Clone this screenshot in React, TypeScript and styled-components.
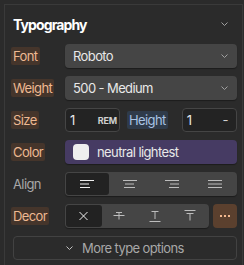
import React from 'react';
import styled, {createGlobalStyle} from 'styled-components';

const GlobalStyle = createGlobalStyle`
  html, body {
    margin: 0;
    padding: 0;
    background: #2b2b2b;
    font-family: Inter, "Noto Sans", sans-serif;
    letter-spacing: -0.6px;
  }
`;

const Frame = styled.div`
  margin: 4px 0 0 4px;
  width: 239px;
  height: 261px;
  box-sizing: border-box;
  border: 1px solid #3a3a3a;
  border-bottom: none;
  padding: 0 5px 0 6px;
`;

const Header = styled.div`
  margin-top: 7px;
  height: 24px;
  display: flex;
  align-items: center;
  justify-content: space-between;
  padding: 0 9px 0 2px;
`;

const Title = styled.h2`
  margin: 0;
  font-size: 14px;
  font-weight: 700;
  letter-spacing: -0.9px;
  color: #ffffff;
`;

const Rows = styled.div`
  margin-top: 8px;
  display: flex;
  flex-direction: column;
  gap: 8px;
`;

const Row = styled.div`
  display: grid;
  grid-template-columns: 54px 1fr;
  align-items: center;
  height: 24px;
`;

type Tone = 'set' | 'inherit' | 'none';

const labelColors: Record<Tone, { fg: string; bg: string }> = {
    set: {fg: '#eeb992', bg: '#45352b'},
    inherit: {fg: '#a9c3e4', bg: '#2f3b4a'},
    none: {fg: '#a8a8a8', bg: 'transparent'},
};

const Label = styled.span<{ $tone: Tone }>`
  justify-self: start;
  padding: 0 2px;
  height: 18px;
  line-height: 18px;
  border-radius: 2px;
  font-size: 13px;
  color: ${p => labelColors[p.$tone].fg};
  background: ${p => labelColors[p.$tone].bg};
`;

const Select = styled.div<{ $bg?: string }>`
  height: 24px;
  box-sizing: border-box;
  border-radius: 4px;
  background: ${p => p.$bg || '#454545'};
  display: flex;
  align-items: center;
  padding: 0 9px 0 8px;
  gap: 8px;
  font-size: 13px;
  color: #e8e8e8;
  box-shadow: 0 1px 1px rgba(0, 0, 0, 0.35);
`;

const Grow = styled.span`
  flex: 1;
`;

const Swatch = styled.span`
  width: 16px;
  height: 16px;
  border-radius: 4px;
  background: #eeeeee;
`;

const SizeLine = styled.div`
  display: flex;
  align-items: center;
`;

const Input = styled.div<{ $w?: number }>`
  width: ${p => (p.$w ? `${p.$w}px` : 'auto')};
  flex: ${p => (p.$w ? 'none' : '1')};
  height: 24px;
  box-sizing: border-box;
  border: 1px solid #454545;
  border-radius: 4px;
  background: #232323;
  display: flex;
  align-items: center;
  padding: 0 8px 0 4px;
  font-size: 13px;
  color: #e8e8e8;
`;

const Unit = styled.span<{ $bold?: boolean }>`
  margin-left: auto;
  margin-right: ${p => (p.$bold ? '-6px' : '0')};
  font-size: ${p => (p.$bold ? '9px' : '13px')};
  font-weight: ${p => (p.$bold ? 700 : 400)};
  letter-spacing: ${p => (p.$bold ? '-0.2px' : '-0.6px')};
  color: #d0d0d0;
`;

const HeightLabel = styled(Label)`
  margin: 0 14px 0 7px;
`;

const Segments = styled.div`
  flex: 1;
  display: flex;
  height: 24px;
  box-sizing: border-box;
  padding: 1px;
  border-radius: 4px;
  background: #454545;
  box-shadow: 0 1px 1px rgba(0, 0, 0, 0.35);
`;

const Segment = styled.div<{ $active?: boolean }>`
  flex: 1;
  display: flex;
  align-items: center;
  justify-content: center;
  border-radius: 3px;
  background: ${p => (p.$active ? '#222222' : 'transparent')};
  color: ${p => (p.$active ? '#f0f0f0' : '#bdbdbd')};
`;

const DecorLine = styled.div`
  display: flex;
  gap: 4px;
`;

const MoreButton = styled.div`
  width: 24px;
  height: 24px;
  border-radius: 4px;
  background: #5b402e;
  display: flex;
  align-items: center;
  justify-content: center;
  gap: 2px;
`;

const Dot = styled.span`
  width: 2px;
  height: 2px;
  background: #f3b88e;
`;

const MoreType = styled.div`
  margin: 0 0 0 2px;
  height: 24px;
  box-sizing: border-box;
  border: 1px solid #424242;
  border-radius: 4px;
  display: flex;
  align-items: center;
  justify-content: center;
  gap: 9px;
  font-size: 13px;
  color: #a8a8a8;
`;

const Chevron = ({color = '#a0a0a0'}: { color?: string }) => (
    <svg width="7" height="4" viewBox="0 0 7 4" fill="none">
        <path d="M0.5 0.5 L3.5 3.5 L6.5 0.5" stroke={color} strokeWidth="1"/>
    </svg>
);

const Lines = ({rows}: { rows: [number, number][] }) => (
    <svg width="14" height="8" viewBox="0 0 14 8" fill="none" stroke="currentColor" strokeWidth="1">
        {rows.map(([a, b], i) => (
            <path key={i} d={`M${a} ${0.5 + i * 3.5} H${b}`}/>
        ))}
    </svg>
);

const alignIcons: [number, number][][] = [
    [[0, 14], [0, 9], [0, 10]],
    [[0, 14], [2, 11], [1, 12]],
    [[0, 14], [5, 14], [4, 14]],
    [[0, 14], [0, 14], [0, 14]],
];

const DecorIcon = ({kind}: { kind: number }) => (
    <svg width="12" height="12" viewBox="0 0 12 12" fill="none" stroke="currentColor" strokeWidth="1">
        {kind === 0 && <path d="M1.5 2 L9.5 10 M9.5 2 L1.5 10"/>}
        {kind === 1 && <path d="M3 2.5 H9 M0.5 5.5 H11.5 M6 2.5 V9.5"/>}
        {kind === 2 && <path d="M2.5 1.5 H9.5 M6 1.5 V9 M0.5 11.5 H11.5"/>}
        {kind === 3 && <path d="M0.5 0.5 H11.5 M2.5 3.5 H9.5 M6 3.5 V10.5"/>}
    </svg>
);

export default function App() {
    return (
        <>
            <GlobalStyle/>
            <Frame>
                <Header>
                    <Title>Typography</Title>
                    <Chevron/>
                </Header>
                <Rows>
                    <Row>
                        <Label $tone="set">Font</Label>
                        <Select>
                            <Grow>Roboto</Grow>
                            <Chevron/>
                        </Select>
                    </Row>
                    <Row>
                        <Label $tone="set">Weight</Label>
                        <Select>
                            <Grow>500 - Medium</Grow>
                            <Chevron/>
                        </Select>
                    </Row>
                    <Row>
                        <Label $tone="set">Size</Label>
                        <SizeLine>
                            <Input $w={55}>
                                1<Unit $bold>REM</Unit>
                            </Input>
                            <HeightLabel $tone="inherit">Height</HeightLabel>
                            <Input>
                                1<Unit>-</Unit>
                            </Input>
                        </SizeLine>
                    </Row>
                    <Row>
                        <Label $tone="set">Color</Label>
                        <Select $bg="#463b63">
                            <Swatch/>
                            <Grow>neutral lightest</Grow>
                        </Select>
                    </Row>
                    <Row>
                        <Label $tone="none">Align</Label>
                        <Segments>
                            {alignIcons.map((rows, i) => (
                                <Segment key={i} $active={i === 0}>
                                    <Lines rows={rows}/>
                                </Segment>
                            ))}
                        </Segments>
                    </Row>
                    <Row>
                        <Label $tone="set">Decor</Label>
                        <DecorLine>
                            <Segments>
                                {[0, 1, 2, 3].map(k => (
                                    <Segment key={k} $active={k === 0}>
                                        <DecorIcon kind={k}/>
                                    </Segment>
                                ))}
                            </Segments>
                            <MoreButton>
                                <Dot/><Dot/><Dot/>
                            </MoreButton>
                        </DecorLine>
                    </Row>
                    <MoreType>
                        <Chevron color="#c0c0c0"/>
                        More type options
                    </MoreType>
                </Rows>
            </Frame>
        </>
    );
}
